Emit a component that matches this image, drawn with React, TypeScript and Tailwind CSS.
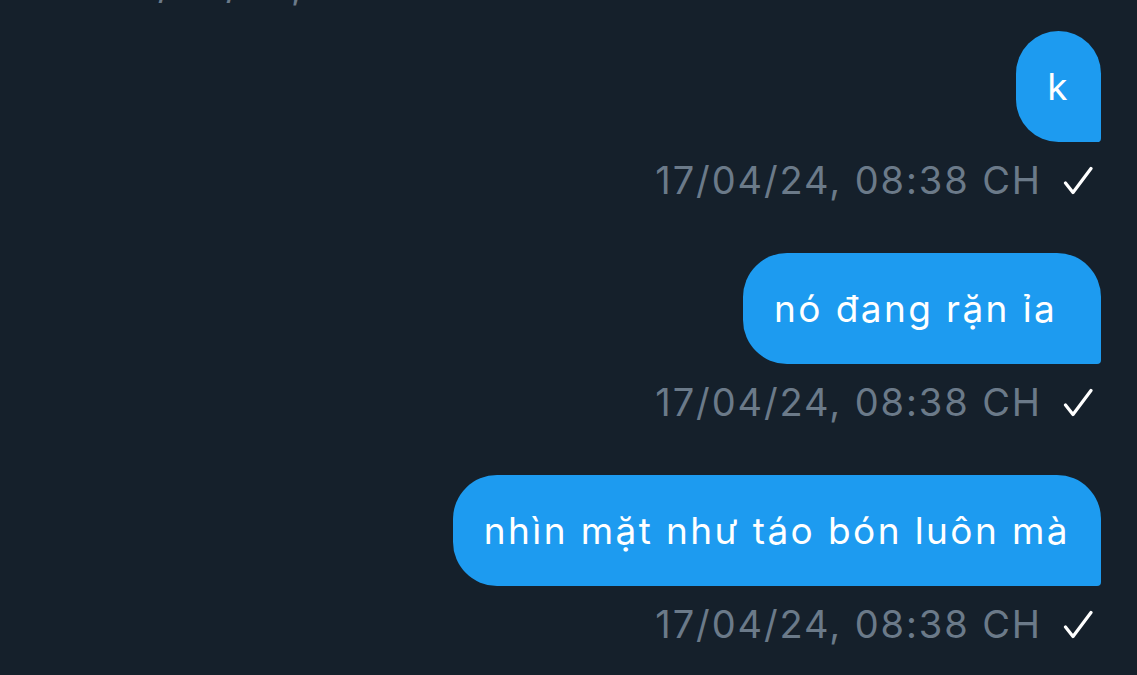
import React from "react";

const messages = ["k", "nó đang rặn ỉa ", "nhìn mặt như táo bón luôn mà"];
const stamp = "17/04/24, 08:38 CH";

function Check() {
  return (
    <svg width="32" height="32" viewBox="0 0 32 32" fill="none" className="shrink-0">
      <path d="M4.5 19 L12 28.5 L30 4.5" stroke="#ffffff" strokeWidth="3.2" strokeLinecap="round" strokeLinejoin="round" />
    </svg>
  );
}

function Message({ text }: { text: string }) {
  return (
    <div className="flex flex-col items-end">
      <div className="h-[111px] px-[31px] flex items-center bg-[#1d9bf0] rounded-[44px] rounded-br-[4px] text-white text-[37px] tracking-[2.4px] leading-none whitespace-pre">
        {text}
      </div>
      <div className="mt-[14px] pr-[8px] flex items-center gap-[19px] h-[48px]">
        <span className="text-[#6b7a89] text-[38px] tracking-[1.9px] leading-[48px]">{stamp}</span>
        <Check />
      </div>
    </div>
  );
}

export default function App() {
  return (
    <div className="w-[1137px] h-[675px] overflow-hidden bg-[#15202b] font-['Inter','Noto_Sans',sans-serif]">
      <div className="mt-[-39px] pl-[117px] text-[#6b7a89] text-[38px] tracking-[1.9px] leading-[48px]">{stamp}</div>
      <div className="mt-[22px] pr-[36px] flex flex-col gap-[49px]">
        {messages.map((m) => (
          <Message key={m} text={m} />
        ))}
      </div>
    </div>
  );
}
